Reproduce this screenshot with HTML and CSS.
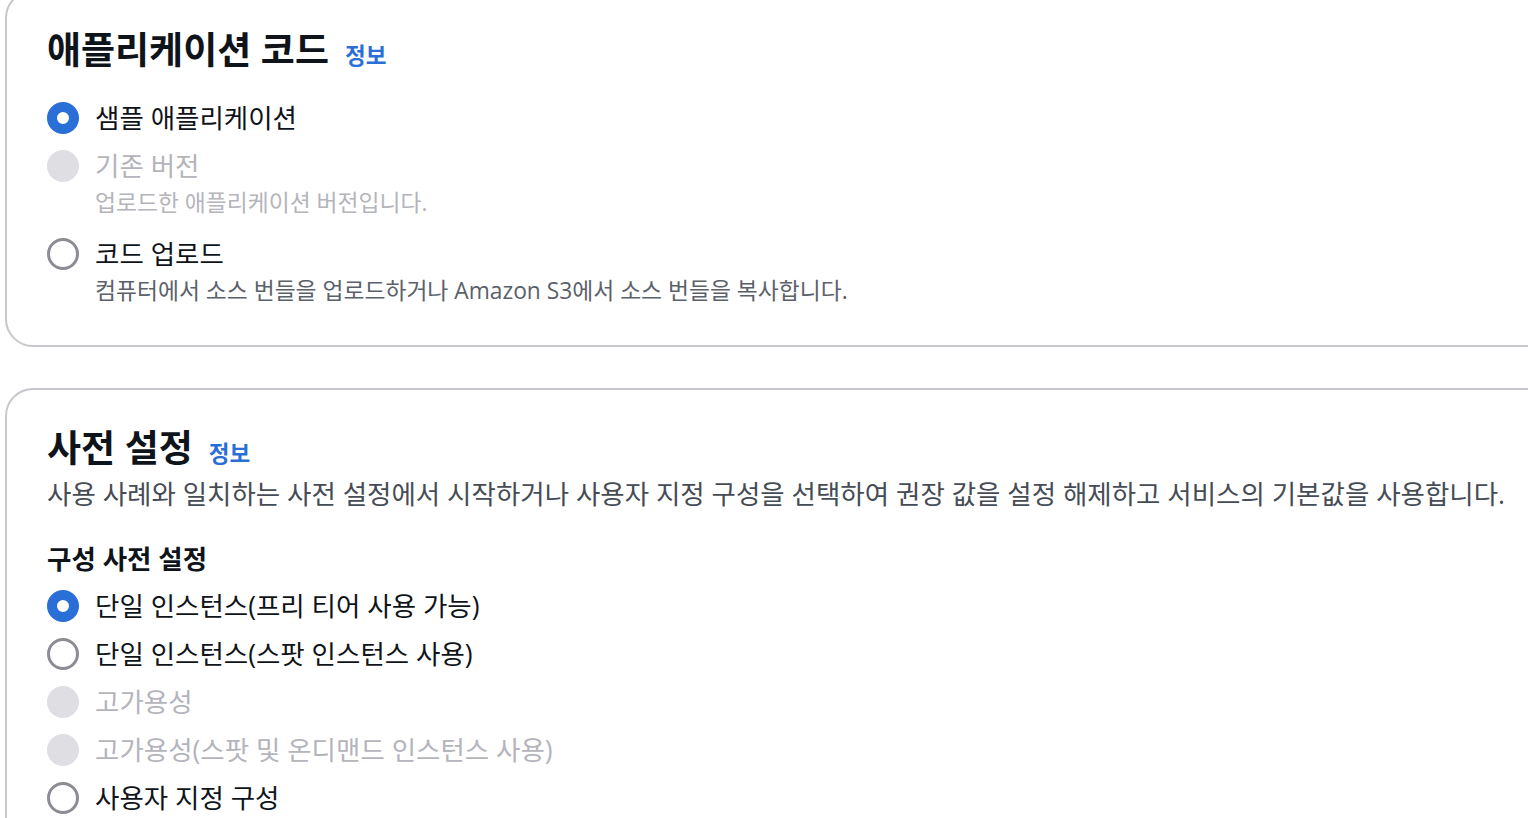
FILE: index.html
```html
<!DOCTYPE html>
<html lang="ko">
<head>
<meta charset="UTF-8" />
<meta name="viewport" content="width=device-width, initial-scale=1" />
<title>애플리케이션 코드</title>
<link rel="stylesheet" href="styles.css">
</head>
<body>

<div class="page">

  <section class="card card-code">
    <div class="card-header">
      <h2 class="card-title">애플리케이션 코드</h2>
      <a class="info-link" href="#">정보</a>
    </div>

    <div class="radio-group">
      <label class="radio">
        <span class="radio-control checked"></span>
        <span class="radio-content">
          <span class="radio-label">샘플 애플리케이션</span>
        </span>
      </label>
      <label class="radio disabled">
        <span class="radio-control"></span>
        <span class="radio-content">
          <span class="radio-label">기존 버전</span>
          <span class="radio-desc">업로드한 애플리케이션 버전입니다.</span>
        </span>
      </label>
      <label class="radio">
        <span class="radio-control"></span>
        <span class="radio-content">
          <span class="radio-label">코드 업로드</span>
          <span class="radio-desc">컴퓨터에서 소스 번들을 업로드하거나 Amazon S3에서 소스 번들을 복사합니다.</span>
        </span>
      </label>
    </div>
  </section>

  <section class="card card-presets">
    <div class="card-header">
      <h2 class="card-title">사전 설정</h2>
      <a class="info-link" href="#">정보</a>
    </div>
    <p class="card-desc">사용 사례와 일치하는 사전 설정에서 시작하거나 사용자 지정 구성을 선택하여 권장 값을 설정 해제하고 서비스의 기본값을 사용합니다.</p>

    <div class="field-label">구성 사전 설정</div>
    <div class="radio-group tight">
      <label class="radio">
        <span class="radio-control checked"></span>
        <span class="radio-content"><span class="radio-label">단일 인스턴스(프리 티어 사용 가능)</span></span>
      </label>
      <label class="radio">
        <span class="radio-control"></span>
        <span class="radio-content"><span class="radio-label">단일 인스턴스(스팟 인스턴스 사용)</span></span>
      </label>
      <label class="radio disabled">
        <span class="radio-control"></span>
        <span class="radio-content"><span class="radio-label">고가용성</span></span>
      </label>
      <label class="radio disabled">
        <span class="radio-control"></span>
        <span class="radio-content"><span class="radio-label">고가용성(스팟 및 온디맨드 인스턴스 사용)</span></span>
      </label>
      <label class="radio">
        <span class="radio-control"></span>
        <span class="radio-content"><span class="radio-label">사용자 지정 구성</span></span>
      </label>
    </div>
  </section>

</div>

</body>
</html>
```

FILE: styles.css
```css
html {
  overflow: hidden;
}

body {
  margin: 0;
  background: #fff;
  color: #0f141a;
  font-family: "Open Sans", "Noto Sans CJK KR", sans-serif;
}

.page {
  margin-top: -10px;
  padding-left: 5px;
  display: flex;
  flex-direction: column;
  gap: 41px;
}

.card {
  margin-right: -80px;
  border: 2px solid #c6c6cd;
  border-radius: 28px;
  padding: 36px 40px 33px;
  background: #fff;
}

.card-header {
  display: flex;
  align-items: baseline;
  gap: 16px;
}

.card-title {
  margin: 0;
  font-size: 37px;
  line-height: 44px;
  font-weight: 700;
  color: #0f141a;
}

.info-link {
  font-size: 22.5px;
  font-weight: 700;
  color: #2a6ed8;
  text-decoration: none;
}

.card-desc {
  margin: 7px 0 0;
  font-size: 26.5px;
  line-height: 35px;
  color: #464c55;
  white-space: nowrap;
}

.field-label {
  margin-top: 30px;
  font-size: 26.5px;
  line-height: 35px;
  font-weight: 700;
}

.radio-group {
  margin-top: 29px;
  display: flex;
  flex-direction: column;
  gap: 13px;
}

.radio-group.tight {
  margin-top: 12px;
}

.radio {
  display: flex;
  align-items: flex-start;
  gap: 16px;
  cursor: pointer;
}

.radio-control {
  flex: none;
  box-sizing: border-box;
  width: 32px;
  height: 32px;
  margin-top: 0.5px;
  border-radius: 50%;
  border: 3px solid #8c8c94;
  background: #fff;
}

.radio-control.checked {
  border: 10px solid #2a6ed8;
}

.radio.disabled .radio-control {
  border: none;
  background: #dedee3;
}

.radio-content {
  display: flex;
  flex-direction: column;
}

.radio-label {
  font-size: 26.5px;
  line-height: 35px;
  color: #0f141a;
  white-space: nowrap;
}

.radio-desc {
  margin: 5px 0 7px;
  font-size: 22.8px;
  line-height: 28px;
  color: #5b616b;
  white-space: nowrap;
}

.radio.disabled .radio-label,
.radio.disabled .radio-desc {
  color: #b4b4bb;
}
```
